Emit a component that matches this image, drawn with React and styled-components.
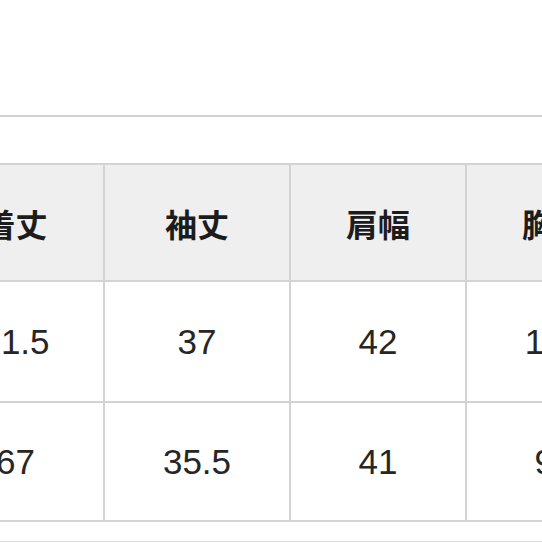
import React from 'react';
import styled, { createGlobalStyle } from 'styled-components';

const GlobalStyle = createGlobalStyle`
  html, body {
    margin: 0;
    padding: 0;
    background: #ffffff;
  }
  body {
    font-family: "Liberation Sans", Arial, sans-serif;
    overflow: hidden;
  }
`;

const Page = styled.div`
  width: 542px;
  height: 542px;
  overflow: hidden;
  padding-top: 115px;
  box-sizing: border-box;
`;

const Rule = styled.div`
  height: 2px;
  background: #d2d2d2;
`;

const TableWrap = styled.div`
  margin-top: 46px;
  margin-left: -74px;
`;

const Grid = styled.div`
  display: grid;
  grid-template-columns: 177px 186px 176px 176px;
  width: max-content;
  border-top: 2px solid #d3d3d3;
  border-left: 2px solid #d3d3d3;
`;

const Cell = styled.div`
  height: ${({ $h }) => $h}px;
  display: flex;
  align-items: center;
  justify-content: center;
  box-sizing: content-box;
  border-right: 2px solid #d3d3d3;
  border-bottom: 2px solid #d3d3d3;
  background: ${({ $head }) => ($head ? '#efefef' : '#ffffff')};
  color: ${({ $head }) => ($head ? '#1c1c1c' : '#262626')};
  font-family: ${({ $head }) =>
    $head
      ? '"Noto Sans CJK JP", "Noto Sans", sans-serif'
      : '"Liberation Sans", Arial, sans-serif'};
  font-weight: ${({ $head }) => ($head ? 700 : 400)};
  font-size: ${({ $head }) => ($head ? 32 : 35)}px;
`;

const BottomRule = styled.div`
  margin-top: 19px;
  height: 1px;
  background: #dcdcdc;
`;

const rows = [
  { head: true, h: 115, cells: ['着丈', '袖丈', '肩幅', '胸囲'] },
  { head: false, h: 119, cells: ['71.5', '37', '42', '104'] },
  { head: false, h: 117, cells: ['67', '35.5', '41', '98'] },
];

export default function App() {
  return (
    <>
      <GlobalStyle />
      <Page>
        <Rule />
        <TableWrap>
          <Grid>
            {rows.map((row, i) =>
              row.cells.map((c, j) => (
                <Cell key={`${i}-${j}`} $head={row.head} $h={row.h}>
                  {c}
                </Cell>
              ))
            )}
          </Grid>
        </TableWrap>
        <BottomRule />
      </Page>
    </>
  );
}
